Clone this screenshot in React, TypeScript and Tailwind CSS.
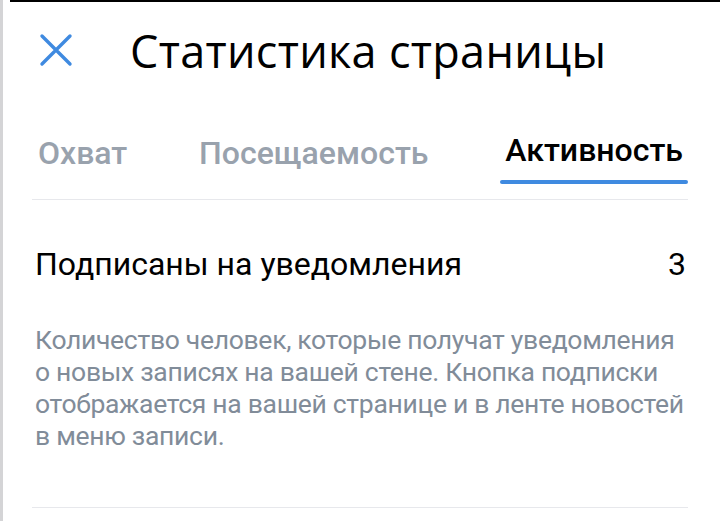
import React from "react";

export default function App() {
  return (
    <div className="w-[720px] h-[521px] bg-white overflow-hidden relative" style={{ fontFamily: "Roboto, 'Liberation Sans', sans-serif" }}>
      <div className="absolute left-[10px] right-0 top-0 h-[2px] bg-black" />
      <div className="flex h-full">
        <div className="w-[3px] bg-[#d4d4d6] shrink-0" />
        <div className="flex-1 pl-[29px] pr-[32px] flex flex-col">
          <div className="flex items-center h-[100px]">
            <svg width="34" height="34" viewBox="0 0 34 34" className="ml-[7px] shrink-0">
              <path d="M3 3 L31 31 M31 3 L3 31" stroke="#3f8ae0" strokeWidth="3.4" strokeLinecap="round" />
            </svg>
            <div className="ml-[57px] text-[45px] font-medium text-black tracking-[0.3px] leading-none" style={{ fontFamily: "'Open Sans', sans-serif" }}>Статистика страницы</div>
          </div>
          <div className="flex justify-between items-end h-[100px] border-b border-[#e7e8ec]">
            <div className="pb-[22px] pl-[6px] text-[32px] font-medium text-[#99a2ad]">Охват</div>
            <div className="pb-[22px] text-[32px] font-medium text-[#99a2ad]">Посещаемость</div>
            <div className="flex flex-col items-center">
              <div className="text-[32px] font-medium text-black px-[5px]">Активность</div>
              <div className="h-[4px] w-full bg-[#3f8ae0] rounded-full mt-[6px] mb-[15px]" />
            </div>
          </div>
          <div className="flex justify-between items-center mt-[40px] pl-[3px] text-[32px] text-black">
            <span>Подписаны на уведомления</span>
            <span className="pr-[2px]">3</span>
          </div>
          <div className="mt-[36px] pl-[3px] text-[26.5px] leading-[32px] text-[#818c99] tracking-[-0.3px] whitespace-nowrap">
            Количество человек, которые получат уведомления<br />
            о новых записях на вашей стене. Кнопка подписки<br />
            отображается на вашей странице и в ленте новостей<br />
            в меню записи.
          </div>
          <div className="mt-auto mb-[13px] h-[1px] bg-[#e7e8ec]" />
        </div>
      </div>
    </div>
  );
}
